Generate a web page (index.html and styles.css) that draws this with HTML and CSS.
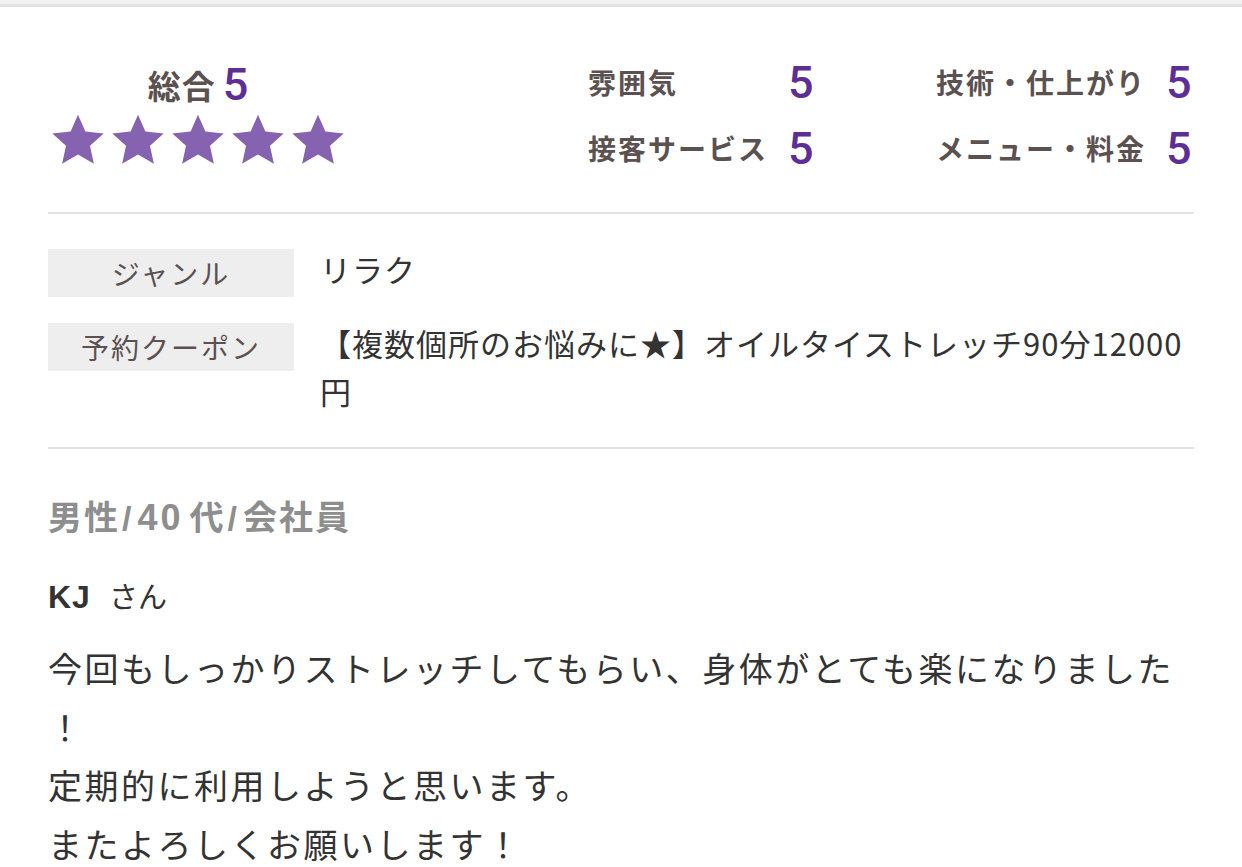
FILE: index.html
```html
<!DOCTYPE html>
<html lang="ja">
<head>
<meta charset="utf-8">
<title>口コミ</title>
<link rel="stylesheet" href="styles.css">
</head>
<body>
<div class="top-bar"></div>
<section class="review">
  <div class="summary">
    <div class="overall">
      <div class="overall-title"><span class="overall-label">総合</span><span class="score">5</span></div>
      <div class="stars">
        <svg class="star" viewBox="0 0 24 24"><polygon points="12,0.8 15.29,8.27 23.41,9.09 17.33,14.53 19.05,22.51 12,18.4 4.95,22.51 6.67,14.53 0.59,9.09 8.71,8.27"/></svg>
        <svg class="star" viewBox="0 0 24 24"><polygon points="12,0.8 15.29,8.27 23.41,9.09 17.33,14.53 19.05,22.51 12,18.4 4.95,22.51 6.67,14.53 0.59,9.09 8.71,8.27"/></svg>
        <svg class="star" viewBox="0 0 24 24"><polygon points="12,0.8 15.29,8.27 23.41,9.09 17.33,14.53 19.05,22.51 12,18.4 4.95,22.51 6.67,14.53 0.59,9.09 8.71,8.27"/></svg>
        <svg class="star" viewBox="0 0 24 24"><polygon points="12,0.8 15.29,8.27 23.41,9.09 17.33,14.53 19.05,22.51 12,18.4 4.95,22.51 6.67,14.53 0.59,9.09 8.71,8.27"/></svg>
        <svg class="star" viewBox="0 0 24 24"><polygon points="12,0.8 15.29,8.27 23.41,9.09 17.33,14.53 19.05,22.51 12,18.4 4.95,22.51 6.67,14.53 0.59,9.09 8.71,8.27"/></svg>
      </div>
    </div>
    <div class="scores">
      <span class="score-label">雰囲気</span><span class="score">5</span>
      <span class="score-label">技術・仕上がり</span><span class="score">5</span>
      <span class="score-label">接客サービス</span><span class="score">5</span>
      <span class="score-label">メニュー・料金</span><span class="score">5</span>
    </div>
  </div>

  <div class="info">
    <div class="info-row">
      <div class="info-label">ジャンル</div>
      <div class="info-value">リラク</div>
    </div>
    <div class="info-row">
      <div class="info-label">予約クーポン</div>
      <div class="info-value">【複数個所のお悩みに★】オイルタイストレッチ90分12000円</div>
    </div>
  </div>

  <div class="comment">
    <div class="reviewer-attr">男性<span class="attr-sep">/</span><span class="attr-num">40</span>代<span class="attr-sep">/</span>会社員</div>
    <div class="reviewer-name"><span class="name">KJ</span><span class="honorific">さん</span></div>
    <p class="comment-body">今回もしっかりストレッチしてもらい、身体がとても楽になりました<br>！<br>定期的に利用しようと思います。<br>またよろしくお願いします！</p>
  </div>
</section>
</body>
</html>
```

FILE: styles.css
```css
* {
  box-sizing: border-box;
}

html, body {
  margin: 0;
  padding: 0;
  background: #ffffff;
}

body {
  font-family: "Noto Sans CJK JP", sans-serif;
  color: #333333;
}

.top-bar {
  height: 7px;
  background: #f2f2f2;
  border-bottom: 3px solid #e1e1e1;
}

.review {
  padding: 0 48px;
}

/* summary */
.summary {
  display: flex;
  align-items: flex-start;
  padding: 42px 0 31px;
  border-bottom: 2px solid #e2e2e2;
}

.overall {
  width: 300px;
  padding-top: 7px;
  text-align: center;
}

.overall-title {
  height: 52px;
  line-height: 52px;
  white-space: nowrap;
}

.overall-label {
  font-size: 33px;
  font-weight: 700;
  letter-spacing: 1px;
  color: #5b5151;
  vertical-align: middle;
}

.overall-title .score {
  margin-left: 7px;
  vertical-align: middle;
}

.score {
  font-family: Roboto, "Liberation Sans", sans-serif;
  font-weight: 500;
  font-size: 45px;
  line-height: 1;
  color: #5d2e96;
}

.stars {
  display: flex;
  justify-content: center;
  gap: 6px;
  margin-top: 5px;
}

.star {
  width: 54px;
  height: 54px;
  display: block;
  fill: #8563b1;
}

.scores {
  margin-left: 240px;
  display: grid;
  grid-template-columns: 200px 148px 230px auto;
  grid-auto-rows: 66px;
  align-items: center;
}

.score-label {
  font-size: 28px;
  font-weight: 700;
  letter-spacing: 2px;
  color: #5b5151;
  white-space: nowrap;
}

/* info table */
.info {
  display: flex;
  flex-direction: column;
  gap: 22px;
  padding: 31px 0 32px;
  border-bottom: 2px solid #e2e2e2;
}

.info-row {
  display: grid;
  grid-template-columns: 246px 1fr;
  column-gap: 26px;
  align-items: start;
}

.info-label {
  margin-top: 4px;
  height: 48px;
  line-height: 48px;
  background: #eeeeee;
  text-align: center;
  font-size: 28px;
  letter-spacing: 2px;
  color: #5b5151;
  white-space: nowrap;
}

.info-value {
  font-size: 31px;
  letter-spacing: 1px;
  line-height: 48px;
  color: #333333;
}

/* comment */
.comment {
  padding-top: 43px;
}

.reviewer-attr {
  font-size: 34px;
  font-weight: 700;
  letter-spacing: 2px;
  line-height: 48px;
  color: #8e8e8e;
}

.attr-sep {
  font-family: "Liberation Sans", Arial, sans-serif;
  margin: 0 4px 0 2px;
}

.attr-num {
  font-family: "Liberation Sans", Arial, sans-serif;
  font-size: 36px;
  letter-spacing: 3px;
  margin-right: 6px;
}

.reviewer-name {
  margin-top: 29px;
  line-height: 48px;
  display: flex;
  align-items: baseline;
}

.name {
  font-family: "Liberation Sans", Arial, sans-serif;
  font-size: 32px;
  font-weight: 700;
  letter-spacing: 1px;
  color: #333333;
}

.honorific {
  margin-left: 18px;
  font-size: 29px;
  color: #333333;
}

.comment-body {
  margin: 18px 0 0;
  font-size: 34px;
  letter-spacing: 2.5px;
  line-height: 58.5px;
  color: #333333;
}
```
